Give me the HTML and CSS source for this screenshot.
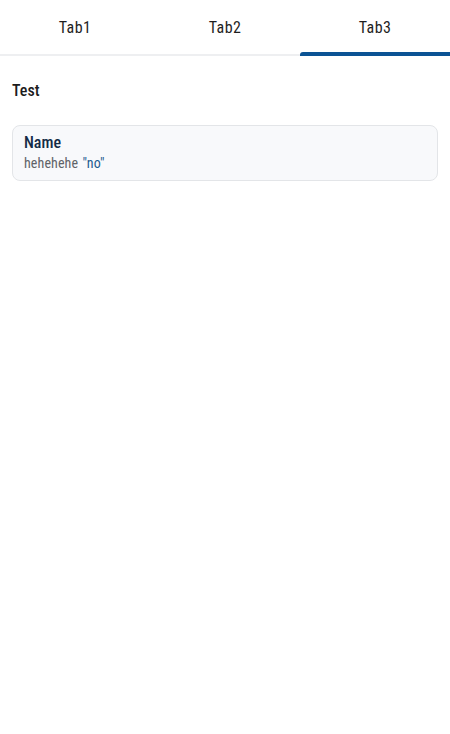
FILE: index.html
```html
<!DOCTYPE html>
<html lang="en">
<head>
  <meta charset="UTF-8" />
  <meta name="viewport" content="width=device-width, initial-scale=1.0"/>
  <title>Tabs</title>
  <link rel="stylesheet" href="styles.css">
</head>
<body>
  <nav class="tabs">
    <div class="tab">Tab1</div>
    <div class="tab">Tab2</div>
    <div class="tab active">Tab3</div>
  </nav>

  <main class="content">
    <h2 class="title">Test</h2>
    <div class="card">
      <div class="card-name">Name</div>
      <div class="card-value">hehehehe <span class="quote">"no"</span></div>
    </div>
  </main>
</body>
</html>
```

FILE: styles.css
```css
body {
  font-family: Roboto, "Noto Sans", sans-serif;
  font-stretch: 80%;
  background-color: #fff;
  color: #222;
  margin: 0;
  padding: 0;
}
.tabs {
  display: flex;
  height: 56px;
  border-bottom: 2px solid #eeeff1;
  box-sizing: border-box;
}
.tab {
  flex: 1;
  display: flex;
  align-items: center;
  justify-content: center;
  font-size: 16px;
  letter-spacing: 0.4px;
  color: #1f1f1f;
  position: relative;
}
.tab.active::after {
  content: "";
  position: absolute;
  left: 0;
  right: 0;
  bottom: -2px;
  height: 4px;
  background-color: #0b5394;
  border-radius: 3px 0 0 0;
}
.content {
  padding: 0 12px;
}
.title {
  font-size: 16px;
  font-weight: 500;
  color: #1c1c1c;
  margin: 25px 0 25px;
}
.card {
  background-color: #f8f9fb;
  border: 1px solid #e3e5e8;
  border-radius: 8px;
  padding: 7px 11px 8px;
}
.card-name {
  font-size: 16px;
  font-weight: 500;
  color: #132b45;
  line-height: 20px;
}
.card-value {
  font-size: 14px;
  letter-spacing: 0.1px;
  color: #606368;
  line-height: 18px;
  margin-top: 1px;
}
.quote {
  color: #1d5b8f;
  margin-left: 1px;
}
```
